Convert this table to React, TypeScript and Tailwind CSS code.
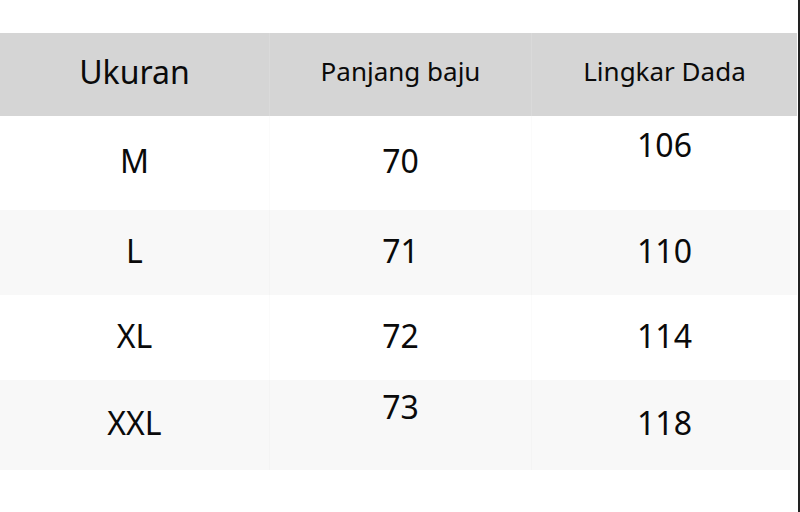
import React from "react";

type Row = {
  size: string;
  length: string;
  chest: string;
  lengthUp?: boolean;
  chestUp?: boolean;
  striped?: boolean;
  height: string;
};

const ROWS: Row[] = [
  { size: "M", length: "70", chest: "106", chestUp: true, height: "h-[94px]" },
  { size: "L", length: "71", chest: "110", striped: true, height: "h-[85px]" },
  { size: "XL", length: "72", chest: "114", height: "h-[85px]" },
  { size: "XXL", length: "73", chest: "118", lengthUp: true, striped: true, height: "h-[90px]" },
];

function Cell({
  children,
  up,
  last,
}: {
  children: React.ReactNode;
  up?: boolean;
  last?: boolean;
}) {
  return (
    <div
      className={`flex items-center justify-center pb-[4px] ${
        last ? "" : "border-r border-black/[0.015]"
      }`}
    >
      <span className={up ? "-mt-[32px]" : ""}>{children}</span>
    </div>
  );
}

export default function App() {
  return (
    <div
      className="w-[800px] h-[512px] bg-white border-r-2 border-[#222] pt-[33px] text-[#0a0a0a]"
      style={{ fontFamily: '"Noto Sans", "Open Sans", sans-serif' }}
    >
      <div className="w-[797px]">
        {/* Header */}
        <div className="grid grid-cols-[270px_262px_265px] h-[83px] bg-[#d5d5d5]">
          <div className="flex items-center justify-center border-r border-[#dadada] text-[32px] pb-[5px]">
            Ukuran
          </div>
          <div className="flex items-center justify-center border-r border-[#dadada] text-[26px] pb-[6px]">
            Panjang baju
          </div>
          <div className="flex items-center justify-center text-[26px] pb-[6px]">
            Lingkar Dada
          </div>
        </div>

        {/* Body */}
        {ROWS.map(row => (
          <div
            key={row.size}
            className={`grid grid-cols-[270px_262px_265px] text-[32px] ${row.height} ${
              row.striped ? "bg-[#f8f8f8]" : "bg-white"
            }`}
          >
            <Cell>{row.size}</Cell>
            <Cell up={row.lengthUp}>{row.length}</Cell>
            <Cell up={row.chestUp} last>
              {row.chest}
            </Cell>
          </div>
        ))}
      </div>
    </div>
  );
}
